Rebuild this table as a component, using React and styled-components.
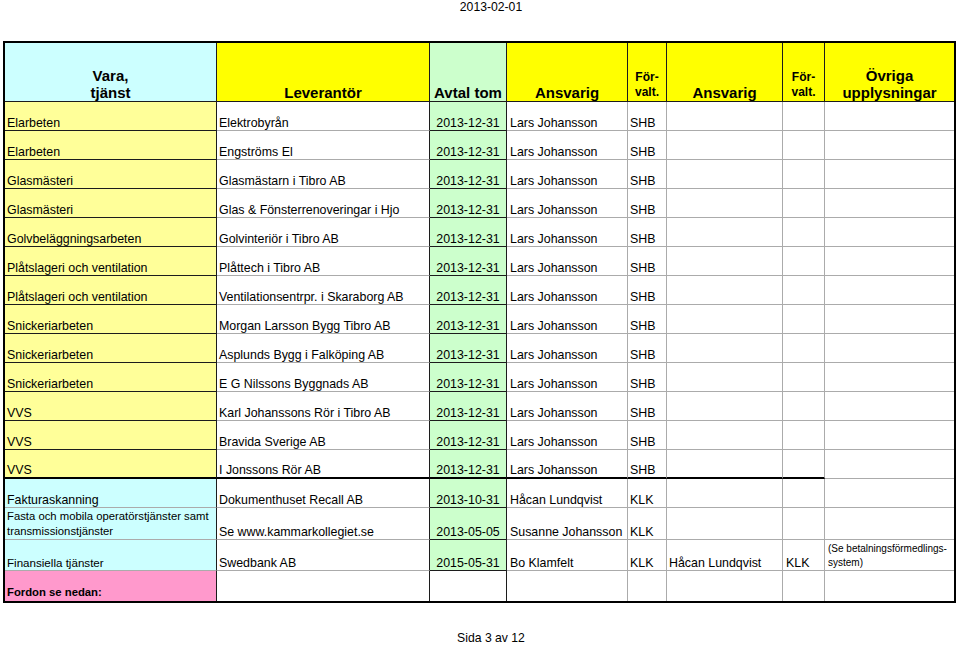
import React from "react";
import styled, { createGlobalStyle } from "styled-components";

const DARK = "#1c1c1c";
const GRAY = "#ababab";
const WHITE = "#ffffff";
const YELLOW = "#ffff00";
const PALE_YELLOW = "#ffff99";
const CYAN = "#ccffff";
const GREEN = "#ccffcc";
const PINK = "#ff99cc";

const GlobalStyle = createGlobalStyle`
	html, body {
		margin: 0;
		padding: 0;
		background: #fff;
	}
	body {
		font-family: "Liberation Sans", Arial, Helvetica, sans-serif;
		color: #000;
	}
`;

const Page = styled.div`
	width: 960px;
	display: flex;
	flex-direction: column;
`;

const PrintLine = styled.div`
	flex-shrink: 0;
	display: flex;
	justify-content: center;
	padding-left: 22px;
	font-size: 12.2px;
	line-height: ${(p) => p.$lh || 14}px;
	height: ${(p) => p.$height}px;
	margin-top: ${(p) => p.$top || 0}px;
`;

const Sheet = styled.div`
	flex-shrink: 0;
	margin-left: 3px;
	width: 949px;
	border: 2px solid #000;
	display: grid;
	grid-template-columns: 212px 213px 77px 121px 39px 116px 42px 129px;
	grid-template-rows: 59px repeat(13, 29px) 29px 32px 31px 30px;
`;

const HeadCell = styled.div`
	box-sizing: border-box;
	background: ${(p) => p.$bg};
	border-right: ${(p) => (p.$last ? "none" : `1px solid ${DARK}`)};
	border-bottom: 1px solid ${DARK};
	display: flex;
	flex-direction: column;
	justify-content: flex-end;
	align-items: center;
	text-align: center;
	font-weight: bold;
	font-size: ${(p) => (p.$small ? 12 : 15)}px;
	line-height: ${(p) => (p.$small ? 15 : 17)}px;
	padding-bottom: ${(p) => (p.$small ? 1 : 0)}px;
`;

const Cell = styled.div`
	box-sizing: border-box;
	background: ${(p) => p.$bg || WHITE};
	border-right: ${(p) => (p.$br ? `1px solid ${p.$br}` : "none")};
	border-bottom: ${(p) => (p.$bw ? `${p.$bw}px solid ${p.$bb}` : "none")};
	display: flex;
	align-items: flex-end;
	justify-content: ${(p) => (p.$center ? "center" : "flex-start")};
	padding: 0 0 ${(p) => p.$pb ?? 0}px ${(p) => p.$pl ?? 2}px;
	font-size: ${(p) => p.$fs || 12.4}px;
	line-height: ${(p) => p.$lh || 14}px;
	font-weight: ${(p) => (p.$bold ? "bold" : "normal")};
	white-space: nowrap;
`;

const Lines = styled.span`
	display: block;
`;

const columns = [
	{ pl: 2, br: DARK },
	{ pl: 2, br: DARK },
	{ center: true, pl: 0, br: DARK },
	{ pl: 3, br: GRAY },
	{ pl: 2, br: GRAY },
	{ pl: 2, br: GRAY },
	{ pl: 3, br: GRAY },
	{ pl: 3, br: null },
];

const suppliers = [
	["Elarbeten", "Elektrobyrån"],
	["Elarbeten", "Engströms El"],
	["Glasmästeri", "Glasmästarn i Tibro AB"],
	["Glasmästeri", "Glas & Fönsterrenoveringar i Hjo"],
	["Golvbeläggningsarbeten", "Golvinteriör i Tibro AB"],
	["Plåtslageri och ventilation", "Plåttech i Tibro AB"],
	["Plåtslageri och ventilation", "Ventilationsentrpr. i Skaraborg AB"],
	["Snickeriarbeten", "Morgan Larsson Bygg Tibro AB"],
	["Snickeriarbeten", "Asplunds Bygg i Falköping AB"],
	["Snickeriarbeten", "E G Nilssons Byggnads AB"],
	["VVS", "Karl Johanssons Rör i Tibro AB"],
	["VVS", "Bravida Sverige AB"],
	["VVS", "I Jonssons Rör AB"],
];

const Header = () => (
	<>
		<HeadCell $bg={CYAN}>
			<span>Vara,</span>
			<span>tjänst</span>
		</HeadCell>
		<HeadCell $bg={YELLOW}>Leverantör</HeadCell>
		<HeadCell $bg={GREEN}>Avtal tom</HeadCell>
		<HeadCell $bg={YELLOW}>Ansvarig</HeadCell>
		<HeadCell $bg={YELLOW} $small>
			<span>För-</span>
			<span>valt.</span>
		</HeadCell>
		<HeadCell $bg={YELLOW}>Ansvarig</HeadCell>
		<HeadCell $bg={YELLOW} $small>
			<span>För-</span>
			<span>valt.</span>
		</HeadCell>
		<HeadCell $bg={YELLOW} $last>
			<span>Övriga</span>
			<span>upplysningar</span>
		</HeadCell>
	</>
);

// one row of the sheet; each cell: { text, bg, bb, bw, ...overrides }
const SheetRow = ({ cells }) =>
	cells.map((c, i) => {
		const col = columns[i];
		return (
			<Cell
				key={i}
				$bg={c.bg}
				$br={col.br}
				$bb={c.bb}
				$bw={c.bw ?? 1}
				$pl={c.pl ?? col.pl}
				$pb={c.pb}
				$center={col.center}
				$fs={c.fs}
				$lh={c.lh}
				$bold={c.bold}
			>
				{Array.isArray(c.text) ? (
					<Lines>
						{c.text.map((t, k) => (
							<div key={k}>{t}</div>
						))}
					</Lines>
				) : (
					c.text
				)}
			</Cell>
		);
	});

const supplierRow = ([service, supplier], idx) => {
	const last = idx === suppliers.length - 1;
	const edge = last ? { bb: "#000", bw: 2 } : null;
	return [
		{ text: service, bg: PALE_YELLOW, bb: DARK, ...edge },
		{ text: supplier, bb: GRAY, ...edge },
		{ text: "2013-12-31", bg: GREEN, bb: DARK, ...edge },
		{ text: "Lars Johansson", bb: GRAY, ...edge },
		{ text: "SHB", bb: GRAY, ...edge },
		{ text: "", bb: GRAY, ...edge },
		{ text: "", bb: GRAY, ...edge },
		{ text: "", bb: GRAY },
	];
};

const otherRows = [
	[
		{ text: "Fakturaskanning", bg: CYAN, bb: GRAY },
		{ text: "Dokumenthuset Recall AB", bb: GRAY },
		{ text: "2013-10-31", bg: GREEN, bb: DARK },
		{ text: "Håcan Lundqvist", bb: GRAY },
		{ text: "KLK", bb: GRAY },
		{ text: "", bb: GRAY },
		{ text: "", bb: GRAY },
		{ text: "", bb: GRAY },
	],
	[
		{
			text: ["Fasta och mobila operatörstjänster samt", "transmissionstjänster"],
			bg: CYAN,
			bb: GRAY,
			fs: 11.3,
			lh: 15,
		},
		{ text: "Se www.kammarkollegiet.se", bb: GRAY },
		{ text: "2013-05-05", bg: GREEN, bb: DARK },
		{ text: "Susanne Johansson", bb: GRAY },
		{ text: "KLK", bb: GRAY },
		{ text: "", bb: GRAY },
		{ text: "", bb: GRAY },
		{ text: "", bb: GRAY },
	],
	[
		{ text: "Finansiella tjänster", bg: CYAN, bb: GRAY, fs: 11.6 },
		{ text: "Swedbank AB", bb: GRAY },
		{ text: "2015-05-31", bg: GREEN, bb: DARK },
		{ text: "Bo Klamfelt", bb: GRAY },
		{ text: "KLK", bb: GRAY },
		{ text: "Håcan Lundqvist", bb: GRAY },
		{ text: "KLK", bb: GRAY },
		{
			text: ["(Se betalningsförmedlings-", "system)"],
			bb: GRAY,
			fs: 10,
			lh: 14,
		},
	],
	[
		{ text: "Fordon se nedan:", bg: PINK, bw: 0, bold: true, fs: 11.3, pb: 2 },
		{ text: "", bw: 0 },
		{ text: "", bw: 0 },
		{ text: "", bw: 0 },
		{ text: "", bw: 0 },
		{ text: "", bw: 0 },
		{ text: "", bw: 0 },
		{ text: "", bw: 0 },
	],
];

export default function App() {
	return (
		<Page>
			<GlobalStyle />
			<PrintLine $height={41}>2013-02-01</PrintLine>
			<Sheet>
				<Header />
				{suppliers.map((row, idx) => (
					<SheetRow key={`s${idx}`} cells={supplierRow(row, idx)} />
				))}
				{otherRows.map((cells, idx) => (
					<SheetRow key={`o${idx}`} cells={cells} />
				))}
			</Sheet>
			<PrintLine $height={12} $lh={12} $top={29}>
				Sida 3 av 12
			</PrintLine>
		</Page>
	);
}
